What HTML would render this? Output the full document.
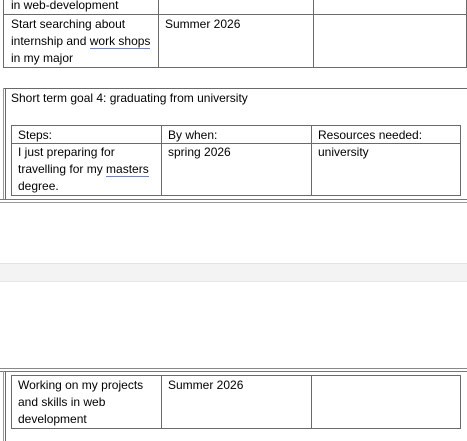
<!DOCTYPE html>
<html><head><style>
body{margin:0;width:467px;height:441px;background:#fff;position:relative;overflow:hidden;font-family:"Liberation Sans",sans-serif;font-size:12px;color:#000;}
.h{position:absolute;height:1px;background:#6a6a6a}
.v{position:absolute;width:1px;background:#6a6a6a}
.t{position:absolute;line-height:17px;letter-spacing:0;white-space:nowrap}
u{text-decoration:none;border-bottom:1px solid #6d7fe0;}
</style></head><body>
<!-- top table -->
<div class="v" style="left:3px;top:0;height:68px"></div>
<div class="v" style="left:158px;top:0;height:68px"></div>
<div class="v" style="left:313px;top:0;height:68px"></div>
<div class="v" style="left:466px;top:0;height:68px"></div>
<div class="h" style="left:3px;top:14px;width:464px"></div>
<div class="h" style="left:3px;top:67px;width:464px"></div>
<div class="t" style="left:11px;top:-3px">in web-development</div>
<div class="t" style="left:11px;top:16px">Start searching about<br>internship and <u>work shops</u><br>in my major</div>
<div class="t" style="left:165px;top:16px">Summer 2026</div>

<!-- box 2 -->
<div class="h" style="left:3px;top:88px;width:464px"></div>
<div class="v" style="left:3px;top:88px;height:112px;background:#999"></div>
<div class="v" style="left:5px;top:88px;height:112px"></div>
<div class="t" style="left:11px;top:90px">Short term goal 4: graduating from university</div>
<div class="h" style="left:11px;top:125px;width:450px"></div>
<div class="h" style="left:11px;top:143px;width:450px"></div>
<div class="h" style="left:11px;top:195px;width:450px"></div>
<div class="v" style="left:11px;top:125px;height:71px"></div>
<div class="v" style="left:161px;top:125px;height:71px"></div>
<div class="v" style="left:311px;top:125px;height:71px"></div>
<div class="v" style="left:460px;top:125px;height:71px"></div>
<div class="t" style="left:18px;top:127px">Steps:</div>
<div class="t" style="left:168px;top:127px">By when:</div>
<div class="t" style="left:318px;top:127px">Resources needed:</div>
<div class="t" style="left:18px;top:144px">I just preparing for<br>travelling for my <u>masters</u><br>degree.</div>
<div class="t" style="left:168px;top:144px">spring 2026</div>
<div class="t" style="left:318px;top:144px">university</div>
<div class="h" style="left:0;top:199px;width:467px;background:#777"></div>
<div class="h" style="left:0;top:202px;width:467px;background:#999"></div>

<!-- gray band -->
<div style="position:absolute;left:0;top:263px;width:467px;height:17px;background:#f3f3f3;border-top:1px solid #e4e4e4;border-bottom:1px solid #e8e8e8"></div>

<!-- bottom -->
<div class="h" style="left:0;top:368px;width:467px;background:#888"></div>
<div class="h" style="left:0;top:371px;width:467px;background:#777"></div>
<div class="v" style="left:3px;top:371px;height:70px;background:#999"></div>
<div class="v" style="left:5px;top:371px;height:70px"></div>
<div class="h" style="left:11px;top:375px;width:450px"></div>
<div class="h" style="left:11px;top:428px;width:450px"></div>
<div class="v" style="left:11px;top:375px;height:54px"></div>
<div class="v" style="left:161px;top:375px;height:54px"></div>
<div class="v" style="left:311px;top:375px;height:54px"></div>
<div class="v" style="left:460px;top:375px;height:54px"></div>
<div class="t" style="left:18px;top:377px">Working on my projects<br>and skills in web<br>development</div>
<div class="t" style="left:168px;top:377px">Summer 2026</div>
</body></html>
